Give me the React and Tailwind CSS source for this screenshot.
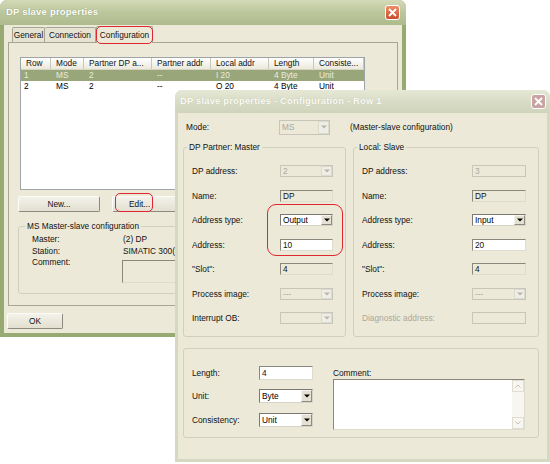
import React from "react";

const cols = [
  { t: "Row", w: "w-[30px]" },
  { t: "Mode", w: "w-[33px]" },
  { t: "Partner DP a...", w: "w-[68px]" },
  { t: "Partner addr", w: "w-[59px]" },
  { t: "Local addr", w: "w-[58px]" },
  { t: "Length", w: "w-[45px]" },
  { t: "Consiste...", w: "w-[50px]" },
];

const rows = [
  ["1", "MS", "2", "--", "I 20", "4 Byte", "Unit"],
  ["2", "MS", "2", "--", "O 20", "4 Byte", "Unit"],
];

function CloseBtn({ dim }) {
  return (
    <span
      className={`ml-auto w-[15px] h-[15px] rounded-[3px] border border-white flex items-center justify-center ${
        dim ? "bg-[#c9a3a3]" : "bg-gradient-to-b from-[#ec8d6b] to-[#c94a2c]"
      }`}
    >
      <svg width="9" height="9" viewBox="0 0 9 9">
        <path d="M1 1l7 7M8 1L1 8" stroke="white" strokeWidth="1.8" />
      </svg>
    </span>
  );
}

function Arrow({ disabled }) {
  return (
    <span
      className={`w-[11px] shrink-0 flex items-center justify-center border ${
        disabled
          ? "border-[#dcdacf] bg-[#efeee6]"
          : "border-t-[#f4f3ee] border-l-[#f4f3ee] border-r-[#8e8c80] border-b-[#8e8c80] bg-[#e4e1d2]"
      }`}
    >
      <svg width="6" height="4" viewBox="0 0 6 4">
        <path d="M0 0.5h6L3 3.5z" fill={disabled ? "#b8b6a8" : "#000"} />
      </svg>
    </span>
  );
}

function Combo({ value, disabled, className = "w-[53px] h-[12px]" }) {
  return (
    <div
      className={`${className} flex border ${
        disabled
          ? "border-[#c8c6b8] bg-[#ece9d8] text-[#aca899]"
          : "border-t-[#7c7a6e] border-l-[#7c7a6e] border-r-[#d6d4c6] border-b-[#d6d4c6] bg-white text-black"
      }`}
    >
      <span className="flex-1 pl-[2px] flex items-center leading-none">{value}</span>
      <Arrow disabled={disabled} />
    </div>
  );
}

function Box({ value, white, disabled, className = "w-[53px] h-[12px]" }) {
  return (
    <div
      className={`${className} flex items-center pl-[2px] leading-none border ${
        disabled
          ? "border-[#c8c6b8] bg-[#ece9d8] text-[#aca899]"
          : "border-t-[#8a887c] border-l-[#8a887c] border-r-[#dedccf] border-b-[#dedccf] " +
            (white ? "bg-white" : "bg-[#ece9d8]")
      }`}
    >
      {value}
    </div>
  );
}

function Row({ label, lw, dim, h = "h-[24.5px]", children }) {
  return (
    <div className={`${h} flex items-center`}>
      <span className={`${lw} shrink-0 ${dim ? "text-[#aca899]" : ""}`}>{label}</span>
      {children}
    </div>
  );
}

function Button({ children, className }) {
  return (
    <div
      className={`${className} h-[16px] flex items-center justify-center border border-t-[#fbfbf8] border-l-[#fbfbf8] border-r-[#8d8b7f] border-b-[#8d8b7f] bg-gradient-to-b from-[#f3f2ea] to-[#e3e0d0] rounded-[2px]`}
    >
      {children}
    </div>
  );
}

function FirstDialog() {
  return (
    <div className="absolute left-0 top-0 w-[406px] h-[337px] rounded-t-[7px] bg-[#97aa72] flex flex-col">
      <div className="h-[25px] shrink-0 flex items-center pl-[6px] pr-[6px] rounded-t-[7px] bg-gradient-to-b from-[#d3dab8] via-[#bcc69b] to-[#aebb8d]">
        <span className="text-white font-bold text-[9.5px] tracking-[0.2px] [text-shadow:0_0_1px_#7f8a62]">
          DP slave properties
        </span>
        <CloseBtn />
      </div>
      <div className="flex-1 mx-[4px] mb-[4px] bg-[#ece9d8] flex flex-col">
        {/* tabs */}
        <div className="flex items-end pl-[8px] h-[17px]">
          <div className="w-[33px] h-[15px] border border-b-0 border-[#a7a594] rounded-t-[2px] flex items-center justify-center bg-[#e6e3d3]">
            General
          </div>
          <div className="w-[51px] h-[15px] border border-b-0 border-l-0 border-[#a7a594] rounded-t-[2px] flex items-center justify-center bg-[#e6e3d3]">
            Connection
          </div>
          <div className="relative w-[57px] h-[17px] border border-b-0 border-[#a7a594] rounded-t-[2px] flex items-center justify-center bg-[#ece9d8] z-10 mb-[-1px]">
            Configuration
            <span className="absolute inset-[-1px] rounded-[5px] border-[1.5px] border-[#e0262e]" />
          </div>
        </div>
        {/* panel */}
        <div className="mx-[4px] h-[264px] border border-[#a7a594] flex flex-col">
          <div className="ml-[11px] mt-[14px] w-[345px] h-[133px] border border-[#9ea3a7] bg-white flex flex-col">
            <div className="h-[12px] flex border-b border-[#d7d4c4] bg-gradient-to-b from-white to-[#ebe9dc]">
              {cols.map((c) => (
                <div key={c.t} className={`${c.w} shrink-0 border-r border-[#c9c7ba] pl-[5px] flex items-center leading-none`}>
                  {c.t}
                </div>
              ))}
            </div>
            {rows.map((r, i) => (
              <div
                key={i}
                className={`h-[11px] flex ${i === 0 ? "bg-[#99a67a] text-[#e9ecdd]" : "text-black"}`}
              >
                {r.map((v, j) => (
                  <div key={j} className={`${cols[j].w} shrink-0 flex items-center leading-none ${j === 0 ? "pl-[3px]" : "pl-[5px]"}`}>
                    {v}
                  </div>
                ))}
              </div>
            ))}
          </div>
          <div className="flex mt-[6px] ml-[9px]">
            <Button className="w-[82px]">New...</Button>
            <div className="relative ml-[12px]">
              <Button className="w-[70px] justify-start pl-[16px]">Edit...</Button>
              <span className="absolute left-[3px] top-[-3px] w-[38px] h-[19px] rounded-[5px] border-[1.5px] border-[#e0262e]" />
            </div>
          </div>
          <fieldset className="ml-[9px] mt-[9px] w-[370px] h-[73px] border border-[#d0d0bf] rounded-[3px] pl-[13px]">
            <legend className="ml-[-7px] px-[2px] leading-[10px]">MS Master-slave configuration</legend>
            <div className="mt-[3px] flex">
              <div className="w-[91px] leading-[11.5px]">
                <div>Master:</div>
                <div>Station:</div>
                <div>Comment:</div>
              </div>
              <div className="leading-[11.5px]">
                <div>(2) DP</div>
                <div>SIMATIC 300(1)</div>
                <div className="w-[150px] h-[23px] mt-[3px] ml-[-1px] border border-t-[#8a887c] border-l-[#8a887c] border-r-[#dedccf] border-b-[#dedccf]" />
              </div>
            </div>
          </fieldset>
        </div>
        <div className="mt-[7px] ml-[3px]">
          <Button className="w-[56px]">OK</Button>
        </div>
      </div>
    </div>
  );
}

function SecondDialog() {
  return (
    <div className="absolute left-[175px] top-[90px] w-[375px] h-[372px] rounded-t-[7px] bg-[#d5d9c2] flex flex-col">
      <div className="h-[23px] shrink-0 flex items-center pl-[5px] pr-[4px] rounded-t-[7px] bg-gradient-to-b from-[#e6e8d6] via-[#d9dcc6] to-[#d0d4bb]">
        <span className="text-[#fbfbf6] font-bold text-[9.4px] tracking-[0.2px] [text-shadow:0_0_1px_#b4b89f]">
          DP slave properties - Configuration - Row 1
        </span>
        <CloseBtn dim />
      </div>
      <div className="flex-1 mx-[3px] mb-[3px] bg-[#ece9d8] flex flex-col">
        <div className="mt-[6px] pl-[8px] h-[16px] flex items-center">
          <span className="w-[93px]">Mode:</span>
          <Combo value="MS" disabled className="w-[51px] h-[15px]" />
          <span className="ml-[20px]">(Master-slave configuration)</span>
        </div>
        <div className="mt-[7px] pl-[5px] flex gap-[7px]">
          <fieldset className="w-[163px] h-[195px] border border-[#d0d0bf] rounded-[3px] px-[8px]">
            <legend className="ml-[-5px] px-[2px] leading-[10px]">DP Partner: Master</legend>
            <div className="relative pt-[7px]">
              <Row label="DP address:" lw="w-[88px]">
                <Combo value="2" disabled />
              </Row>
              <Row label="Name:" lw="w-[88px]">
                <Box value="DP" />
              </Row>
              <Row label="Address type:" lw="w-[88px]">
                <Combo value="Output" />
              </Row>
              <Row label="Address:" lw="w-[88px]">
                <Box value="10" white />
              </Row>
              <Row label={'"Slot":'} lw="w-[88px]">
                <Box value="4" />
              </Row>
              <Row label="Process image:" lw="w-[88px]">
                <Combo value="---" disabled />
              </Row>
              <Row label="Interrupt OB:" lw="w-[88px]">
                <Combo value="" disabled />
              </Row>
              <span className="absolute left-[75px] top-[52px] w-[76px] h-[52px] rounded-[9px] border-[1.5px] border-[#e0262e]" />
            </div>
          </fieldset>
          <fieldset className="w-[186px] h-[195px] border border-[#d0d0bf] rounded-[3px] px-[8px]">
            <legend className="ml-[-5px] px-[2px] leading-[10px]">Local: Slave</legend>
            <div className="pt-[7px]">
              <Row label="DP address:" lw="w-[110px]">
                <Box value="3" disabled className="w-[54px] h-[12px]" />
              </Row>
              <Row label="Name:" lw="w-[110px]">
                <Box value="DP" className="w-[54px] h-[12px]" />
              </Row>
              <Row label="Address type:" lw="w-[110px]">
                <Combo value="Input" className="w-[54px] h-[12px]" />
              </Row>
              <Row label="Address:" lw="w-[110px]">
                <Box value="20" white className="w-[54px] h-[12px]" />
              </Row>
              <Row label={'"Slot":'} lw="w-[110px]">
                <Box value="4" className="w-[54px] h-[12px]" />
              </Row>
              <Row label="Process image:" lw="w-[110px]">
                <Combo value="---" disabled className="w-[54px] h-[12px]" />
              </Row>
              <Row label="Diagnostic address:" lw="w-[110px]" dim>
                <Box value="" disabled className="w-[54px] h-[12px]" />
              </Row>
            </div>
          </fieldset>
        </div>
        <fieldset className="ml-[5px] mt-[11px] w-[356px] h-[90px] border border-[#d0d0bf] rounded-[3px] px-[8px] pt-[12px] flex">
          <div className="flex">
            <div>
              <Row label="Length:" lw="w-[67px]" h="h-[23.5px]">
                <Box value="4" white className="w-[54px] h-[14px]" />
              </Row>
              <Row label="Unit:" lw="w-[67px]" h="h-[23.5px]">
                <Combo value="Byte" className="w-[54px] h-[14px]" />
              </Row>
              <Row label="Consistency:" lw="w-[67px]" h="h-[23.5px]">
                <Combo value="Unit" className="w-[54px] h-[14px]" />
              </Row>
            </div>
            <div className="ml-[20px] pt-[7px]">
              <div className="leading-[10px]">Comment:</div>
              <div className="mt-[1px] w-[192px] h-[51px] bg-white border border-t-[#8a887c] border-l-[#8a887c] border-r-[#dedccf] border-b-[#dedccf] flex justify-end">
                <div className="w-[12px] flex flex-col justify-between bg-[#f7f6f1]">
                  <span className="h-[12px] border border-[#e0ded3] flex items-center justify-center">
                    <svg width="6" height="4" viewBox="0 0 6 4">
                      <path d="M0.5 3.5L3 1l2.5 2.5" stroke="#c4c2b6" fill="none" />
                    </svg>
                  </span>
                  <span className="h-[12px] border border-[#e0ded3] flex items-center justify-center">
                    <svg width="6" height="4" viewBox="0 0 6 4">
                      <path d="M0.5 0.5L3 3l2.5-2.5" stroke="#c4c2b6" fill="none" />
                    </svg>
                  </span>
                </div>
              </div>
            </div>
          </div>
        </fieldset>
      </div>
    </div>
  );
}

export default function App() {
  return (
    <div className="relative w-[550px] h-[464px] overflow-hidden bg-white font-['Liberation_Sans',Arial,sans-serif] text-[8.3px] text-[#111]">
      <FirstDialog />
      <SecondDialog />
    </div>
  );
}
